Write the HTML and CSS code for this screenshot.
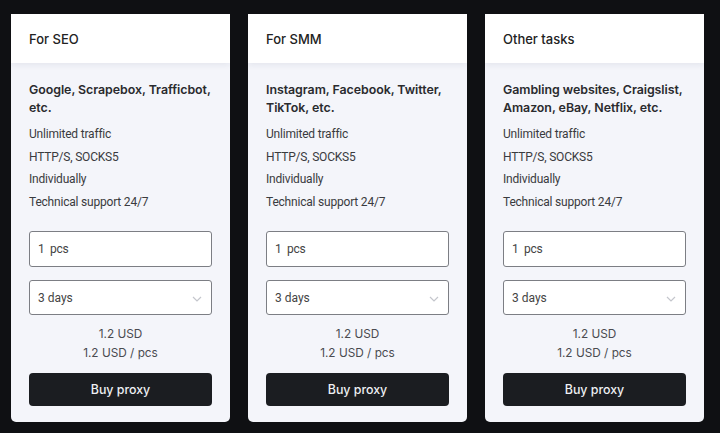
FILE: index.html
```html
<!DOCTYPE html>
<html lang="en">
<head>
    <meta charset="UTF-8">
    <meta name="viewport" content="width=device-width, initial-scale=1.0">
    <title>Proxy plans</title>
    <link rel="stylesheet" href="styles.css">
</head>
<body>
    <div class="plans">
        <div class="card">
            <div class="card-head">For SEO</div>
            <div class="card-body">
                <p class="uses">Google, Scrapebox, Trafficbot, etc.</p>
                <ul class="features">
                    <li>Unlimited traffic</li>
                    <li>HTTP/S, SOCKS5</li>
                    <li>Individually</li>
                    <li>Technical support 24/7</li>
                </ul>
                <label class="field qty">
                    <input type="text" value="1">
                    <span>pcs</span>
                </label>
                <div class="field period">
                    <select>
                        <option>3 days</option>
                        <option>7 days</option>
                        <option>30 days</option>
                    </select>
                    <svg class="chevron" width="10" height="6" viewBox="0 0 10 6"><path d="M1 1l4 4 4-4" fill="none" stroke="#c4c6cc" stroke-width="1.2"/></svg>
                </div>
                <div class="price">
                    <div>1.2 USD</div>
                    <div>1.2 USD / pcs</div>
                </div>
                <button class="buy">Buy proxy</button>
            </div>
        </div>

        <div class="card">
            <div class="card-head">For SMM</div>
            <div class="card-body">
                <p class="uses">Instagram, Facebook, Twitter, TikTok, etc.</p>
                <ul class="features">
                    <li>Unlimited traffic</li>
                    <li>HTTP/S, SOCKS5</li>
                    <li>Individually</li>
                    <li>Technical support 24/7</li>
                </ul>
                <label class="field qty">
                    <input type="text" value="1">
                    <span>pcs</span>
                </label>
                <div class="field period">
                    <select>
                        <option>3 days</option>
                        <option>7 days</option>
                        <option>30 days</option>
                    </select>
                    <svg class="chevron" width="10" height="6" viewBox="0 0 10 6"><path d="M1 1l4 4 4-4" fill="none" stroke="#c4c6cc" stroke-width="1.2"/></svg>
                </div>
                <div class="price">
                    <div>1.2 USD</div>
                    <div>1.2 USD / pcs</div>
                </div>
                <button class="buy">Buy proxy</button>
            </div>
        </div>

        <div class="card">
            <div class="card-head">Other tasks</div>
            <div class="card-body">
                <p class="uses">Gambling websites, Craigslist, Amazon, eBay, Netflix, etc.</p>
                <ul class="features">
                    <li>Unlimited traffic</li>
                    <li>HTTP/S, SOCKS5</li>
                    <li>Individually</li>
                    <li>Technical support 24/7</li>
                </ul>
                <label class="field qty">
                    <input type="text" value="1">
                    <span>pcs</span>
                </label>
                <div class="field period">
                    <select>
                        <option>3 days</option>
                        <option>7 days</option>
                        <option>30 days</option>
                    </select>
                    <svg class="chevron" width="10" height="6" viewBox="0 0 10 6"><path d="M1 1l4 4 4-4" fill="none" stroke="#c4c6cc" stroke-width="1.2"/></svg>
                </div>
                <div class="price">
                    <div>1.2 USD</div>
                    <div>1.2 USD / pcs</div>
                </div>
                <button class="buy">Buy proxy</button>
            </div>
        </div>
    </div>
</body>
</html>
```

FILE: styles.css
```css
* {
    box-sizing: border-box;
}
body {
    margin: 0;
    background-color: #0f1013;
    font-family: Inter, 'Noto Sans', sans-serif;
    color: #222;
}
.plans {
    display: flex;
    align-items: flex-start;
    gap: 18px;
    padding: 14px 16px 10px 11px;
}
.card {
    width: 219px;
    background-color: #f4f5fa;
    border-radius: 0 0 5px 5px;
    overflow: hidden;
}
.card-head {
    background-color: #fff;
    padding: 17px 18px 15px;
    height: 49px;
    font-size: 13px;
    line-height: 17px;
    font-weight: 500;
    color: #222;
    box-shadow: 0 2px 6px rgba(40, 50, 90, 0.08);
    position: relative;
}
.card-body {
    padding: 18px 18px 16px;
}
.uses {
    margin: 0 -4px 0 0;
    font-size: 12.4px;
    line-height: 18px;
    font-weight: 600;
    letter-spacing: -0.05px;
    color: #2a2b2e;
}
.features {
    list-style: none;
    margin: 6px 0 0;
    padding: 0;
    font-family: Roboto, sans-serif;
    font-size: 12px;
    line-height: 22.5px;
    letter-spacing: -0.2px;
    color: #3a3b3e;
}
.field {
    display: flex;
    align-items: center;
    height: 36px;
    background-color: #fff;
    border: 1px solid #7c7e84;
    border-radius: 3px;
    font-family: Roboto, sans-serif;
    font-size: 12px;
    letter-spacing: -0.2px;
    color: #444;
}
.qty {
    margin-top: 18px;
    padding: 0 8px;
    gap: 4px;
}
.qty input {
    width: 8px;
    border: none;
    padding: 0;
    font: inherit;
    color: inherit;
    outline: none;
    background: none;
}
.period {
    margin-top: 13px;
    height: 35px;
    position: relative;
}
.period select {
    appearance: none;
    width: 100%;
    height: 100%;
    border: none;
    background: none;
    padding: 0 8px;
    font: inherit;
    color: inherit;
    outline: none;
}
.chevron {
    position: absolute;
    right: 9px;
    top: 15px;
    pointer-events: none;
}
.price {
    margin-top: 10px;
    text-align: center;
    font-size: 11.8px;
    line-height: 19px;
    color: #4a4b50;
}
.buy {
    display: block;
    width: 100%;
    height: 33px;
    margin-top: 10px;
    border: none;
    border-radius: 4px;
    background-color: #1b1d21;
    color: #eef0f3;
    font-family: Inter, sans-serif;
    font-size: 12.4px;
    font-weight: 500;
    cursor: pointer;
}
```
